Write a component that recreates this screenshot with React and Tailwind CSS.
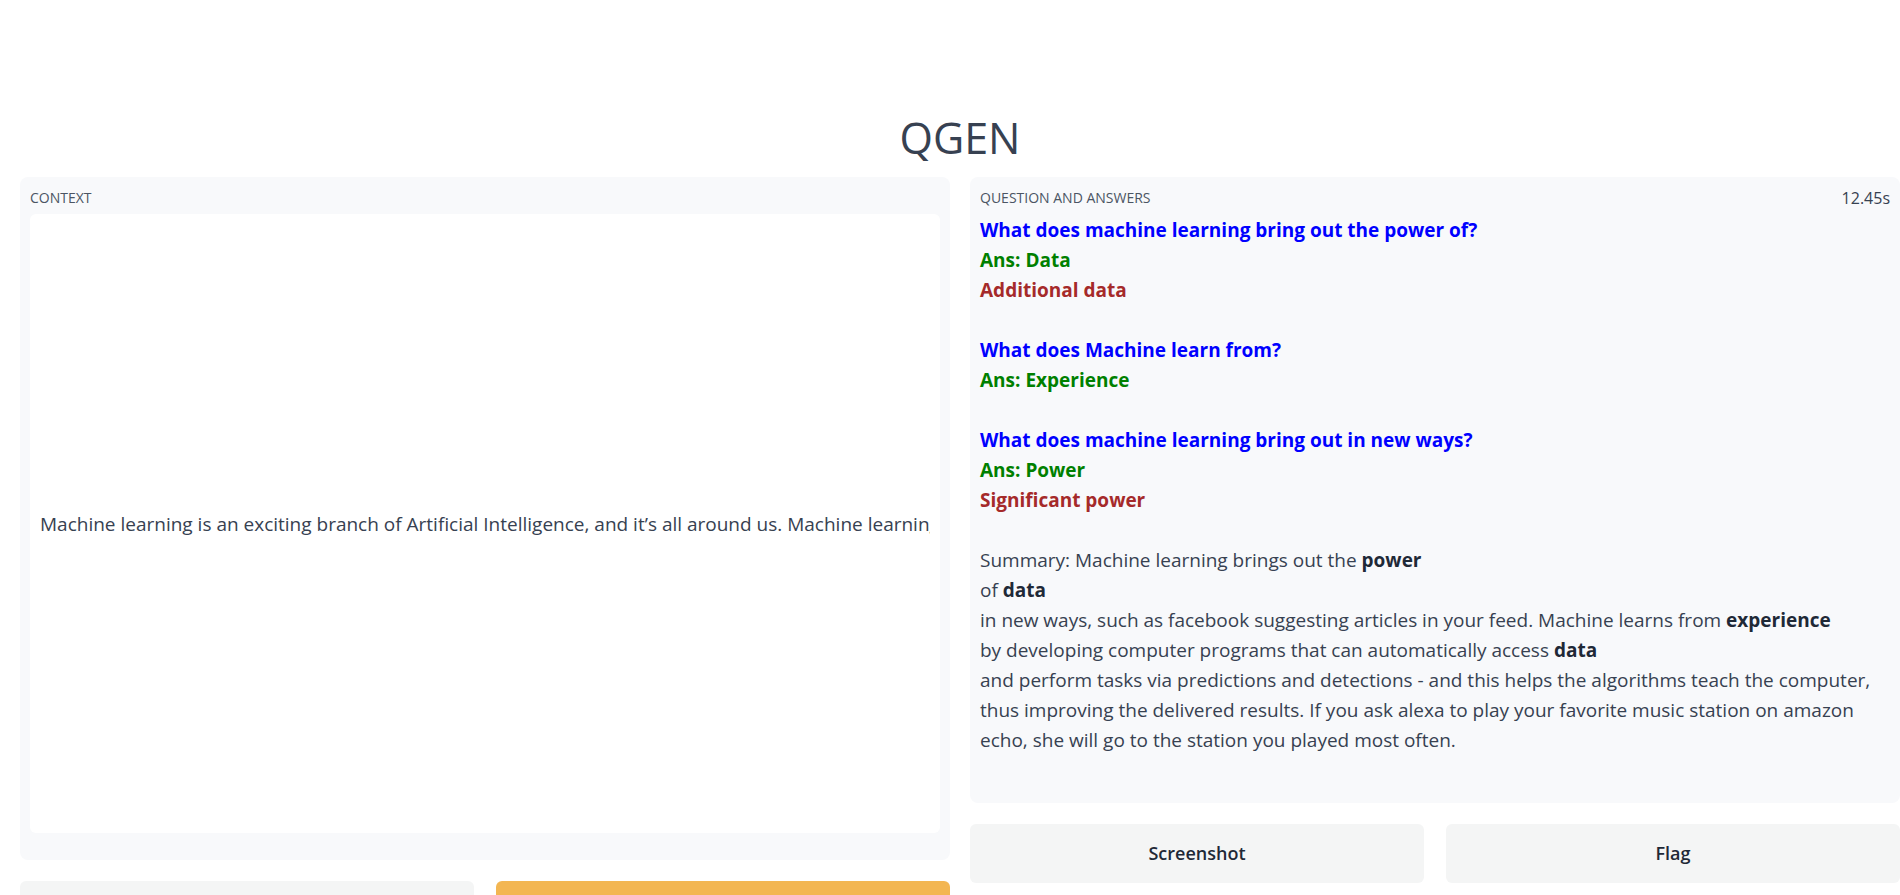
import React from 'react';

const qas = [
  { q: 'What does machine learning bring out the power of?', a: 'Data', alt: 'Additional data' },
  { q: 'What does Machine learn from?', a: 'Experience' },
  { q: 'What does machine learning bring out in new ways?', a: 'Power', alt: 'Significant power' },
];

const contextText =
  'Machine learning is an exciting branch of Artificial Intelligence, and it’s all around us. Machine learning brings out the power of data in new ways, such as Facebook suggesting articles in your feed.';

function Panel({ children, className = '' }) {
  return <div className={`rounded-lg bg-[#f8f9fb] ${className}`}>{children}</div>;
}

function Btn({ children, variant = 'secondary' }) {
  const tone =
    variant === 'primary'
      ? 'bg-[#f3b652] text-white'
      : 'bg-[#f4f5f5] text-[#1f2937]';
  return (
    <button className={`flex-1 h-[59px] rounded-md text-[18px] font-semibold ${tone}`}>
      {children}
    </button>
  );
}

export default function App() {
  return (
    <div className="min-h-screen bg-white text-[#374151] font-['Open_Sans',sans-serif]">
      <h1 className="pl-5 pt-[110px] pb-[11px] text-center text-[43px] leading-[56px] text-[#374151]">QGEN</h1>

      <div className="flex gap-5 pl-5">
        {/* left column */}
        <div className="w-[930px] shrink-0">
          <Panel className="h-[683px] px-[10px] pt-[11px] flex flex-col">
            <span className="text-[14px] leading-5 uppercase text-[#4b5563]">Context</span>
            <div className="mt-[6px] h-[619px] rounded-md bg-white flex items-center px-[10px]">
              <div className="w-full overflow-hidden">
                <p className="whitespace-nowrap text-[19px] leading-[30px]">{contextText}</p>
              </div>
            </div>
          </Panel>
          <div className="flex gap-[22px] mt-[21px]">
            <Btn>Clear</Btn>
            <Btn variant="primary">Submit</Btn>
          </div>
        </div>

        {/* right column */}
        <div className="w-[930px] shrink-0">
          <Panel className="h-[626px] px-[10px] pt-[11px]">
            <div className="flex justify-between">
              <span className="text-[14px] leading-5 uppercase text-[#4b5563]">Question and answers</span>
              <span className="text-[16px] leading-5 text-[#374151]">12.45s</span>
            </div>
            <div className="mt-[7px] text-[19px] leading-[30px]">
              {qas.map((item) => (
                <div key={item.q} className="font-bold mb-[30px]">
                  <div className="text-[blue]">{item.q}</div>
                  <div className="text-[green]">Ans: {item.a}</div>
                  {item.alt && <div className="text-[brown]">{item.alt}</div>}
                </div>
              ))}
              <div>
                Summary: Machine learning brings out the <b className="text-[#1f2937]">power</b>
                <br />
                of <b className="text-[#1f2937]">data</b>
                <br />
                in new ways, such as facebook suggesting articles in your feed. Machine learns from{' '}
                <b className="text-[#1f2937]">experience</b>
                <br />
                by developing computer programs that can automatically access <b className="text-[#1f2937]">data</b>
                <br />
                and perform tasks via predictions and detections - and this helps the algorithms teach the computer,
                thus improving the delivered results. If you ask alexa to play your favorite music station on amazon
                echo, she will go to the station you played most often.
              </div>
            </div>
          </Panel>
          <div className="flex gap-[22px] mt-[21px]">
            <Btn>Screenshot</Btn>
            <Btn>Flag</Btn>
          </div>
        </div>
      </div>
    </div>
  );
}
